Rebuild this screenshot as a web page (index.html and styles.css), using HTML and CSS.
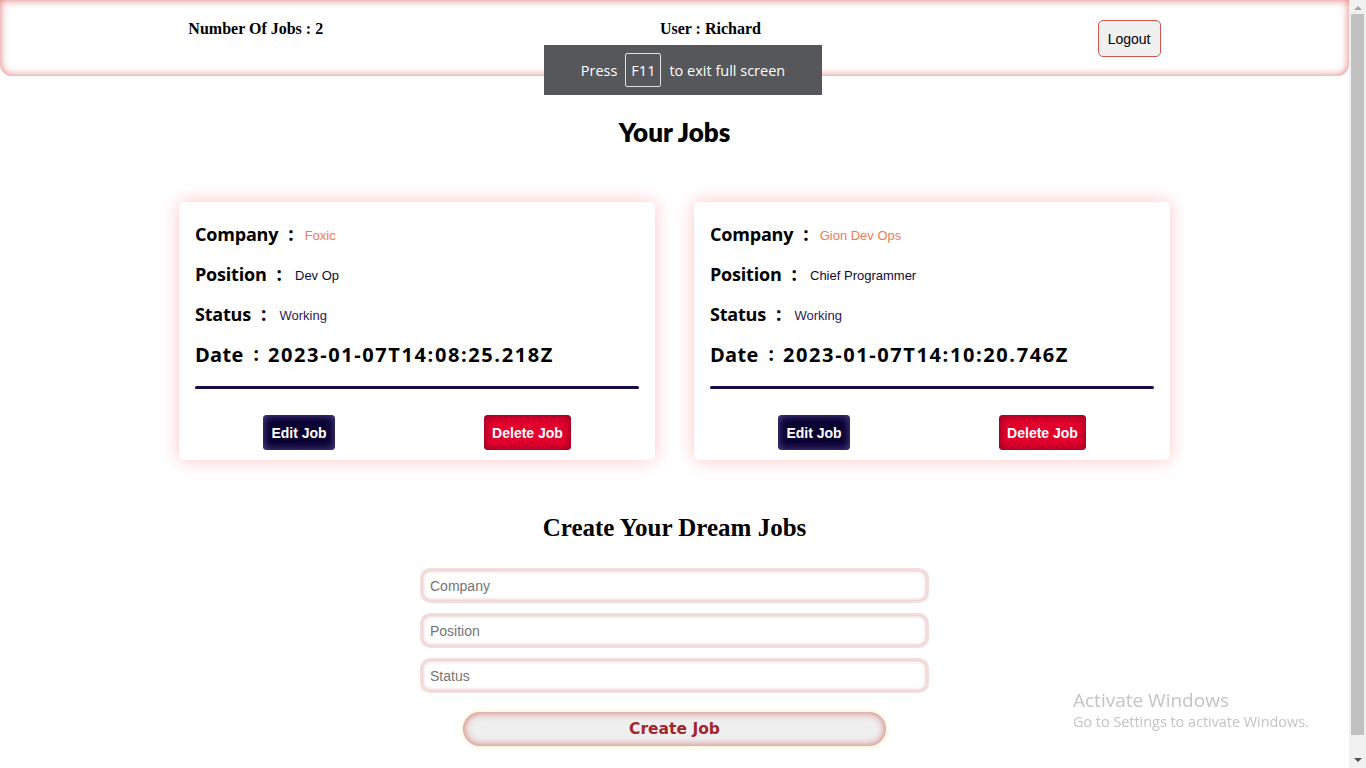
FILE: index.html
```html
<!DOCTYPE html>
<html>
<head>
<meta charset="utf-8">
<title>Jobs</title>
<link rel="stylesheet" href="styles.css">
</head>
<body>
<div class="viewport">
  <header class="topbar">
    <h4 class="topbar-text">Number Of Jobs : 2</h4>
    <h4 class="topbar-text">User : Richard</h4>
    <button class="logout">Logout</button>
  </header>

  <main class="page">
    <h2 class="jobs-title">Your Jobs</h2>
    <section class="cards">
      <article class="card">
        <div class="row"><span class="lbl">Company</span><span class="colon">:</span><span class="val company">Foxic</span></div>
        <div class="row"><span class="lbl">Position</span><span class="colon">:</span><span class="val position">Dev Op</span></div>
        <div class="row"><span class="lbl">Status</span><span class="colon">:</span><span class="val status">Working</span></div>
        <div class="row"><span class="lbl date-lbl">Date</span><span class="colon date-colon">:</span><span class="date">2023-01-07T14:08:25.218Z</span></div>
        <hr class="sep">
        <div class="actions">
          <button class="btn edit">Edit Job</button>
          <button class="btn delete">Delete Job</button>
        </div>
      </article>
      <article class="card">
        <div class="row"><span class="lbl">Company</span><span class="colon">:</span><span class="val company">Gion Dev Ops</span></div>
        <div class="row"><span class="lbl">Position</span><span class="colon">:</span><span class="val position">Chief Programmer</span></div>
        <div class="row"><span class="lbl">Status</span><span class="colon">:</span><span class="val status">Working</span></div>
        <div class="row"><span class="lbl date-lbl">Date</span><span class="colon date-colon">:</span><span class="date">2023-01-07T14:10:20.746Z</span></div>
        <hr class="sep">
        <div class="actions">
          <button class="btn edit">Edit Job</button>
          <button class="btn delete">Delete Job</button>
        </div>
      </article>
    </section>

    <h2 class="create-title">Create Your Dream Jobs</h2>
    <form class="form">
      <input class="field" type="text" placeholder="Company">
      <input class="field" type="text" placeholder="Position">
      <input class="field" type="text" placeholder="Status">
      <button type="button" class="create">Create Job</button>
    </form>
  </main>
</div>

<div class="scrollbar">
  <span class="arrow up"></span>
  <span class="thumb"></span>
  <span class="arrow down"></span>
</div>

<div class="fs-note">Press <span class="key">F11</span> to exit full screen</div>

<div class="activate">
  <div class="act-title">Activate Windows</div>
  <div class="act-sub">Go to Settings to activate Windows.</div>
</div>
</body>
</html>
```

FILE: styles.css
```css
html, body {
  margin: 0;
  padding: 0;
  background: #ffffff;
}

body {
  font-family: "Liberation Serif", serif;
  color: #000;
  overflow: hidden;
}

.viewport {
  margin-right: 17px;
}

.topbar {
  height: 76px;
  box-sizing: border-box;
  padding: 20px 20px 0;
  display: flex;
  justify-content: space-around;
  align-items: flex-start;
  border-radius: 0 0 12px 12px;
  box-shadow: inset 0 0 9px rgba(214, 70, 70, 0.75);
  background: #fff;
}

.topbar-text {
  margin: 0;
  font-family: "Liberation Serif", serif;
  font-weight: 700;
  font-size: 16px;
  line-height: 18px;
}

.logout {
  width: 63px;
  height: 37px;
  padding: 0;
  border: 1px solid #d9534f;
  border-radius: 5px;
  background: #f0f0f0;
  font-family: "Liberation Sans", Arial, sans-serif;
  font-size: 14px;
  color: #000;
}

.page {
  display: flex;
  flex-direction: column;
  align-items: center;
  padding-bottom: 40px;
}

.jobs-title {
  margin: 41px 0 0;
  font-family: "Lato", sans-serif;
  font-weight: 800;
  font-size: 26px;
  line-height: 30px;
}

.cards {
  margin-top: 55px;
  display: flex;
  gap: 39px;
}

.card {
  width: 476px;
  height: 258px;
  box-sizing: border-box;
  padding: 12px 16px 10px;
  border-radius: 5px;
  background: #fff;
  box-shadow: 0 0 18px rgba(255, 90, 90, 0.35);
}

.row {
  height: 40px;
  display: flex;
  align-items: center;
}

.lbl {
  font-family: "Comic Sans MS", "Open Sans", sans-serif;
  font-weight: 700;
  font-size: 18px;
  letter-spacing: -0.2px;
}

.date-lbl {
  font-size: 20px;
  letter-spacing: 0.3px;
}

.colon {
  font-family: "Open Sans", sans-serif;
  font-weight: 700;
  font-size: 19px;
  margin: 0 11px 0 10px;
}

.date-colon {
  margin: 0 9px 0 10px;
}

.val {
  font-family: "Liberation Sans", Arial, sans-serif;
  font-size: 13px;
  padding-top: 3px;
}

.company { color: #f47a52; }
.position { color: #0e0b35; margin-left: 2px; }
.status { color: #2c1a50; margin-left: 2px; }

.date {
  font-family: "Comic Sans MS", "Open Sans", sans-serif;
  font-weight: 700;
  font-size: 20px;
  letter-spacing: 1.6px;
}

.sep {
  margin: 12px 0 0;
  height: 3px;
  border: 0;
  border-radius: 2px;
  background: #170a45;
}

.actions {
  margin-top: 26px;
  padding: 0 68px;
  display: flex;
  justify-content: space-between;
}

.btn {
  height: 35px;
  padding: 0;
  border: 0;
  border-radius: 4px;
  color: #fff;
  white-space: nowrap;
  font-family: "Liberation Sans", Arial, sans-serif;
  font-weight: 700;
  font-size: 14px;
}

.edit {
  width: 72px;
  background: #0a0232;
  box-shadow: inset 0 0 8px #5e4f9a;
}

.delete {
  width: 87px;
  background: #e2002c;
  box-shadow: inset 0 0 9px #7d0022;
}

.create-title {
  margin: 53px 0 0;
  font-family: "Liberation Serif", serif;
  font-weight: 700;
  font-size: 25px;
  line-height: 30px;
}

.form {
  margin-top: 25px;
  display: flex;
  flex-direction: column;
  align-items: center;
  gap: 10px;
}

.field {
  width: 509px;
  height: 35px;
  box-sizing: border-box;
  padding: 0 8px;
  border: 2px solid #f3dede;
  border-radius: 10px;
  box-shadow: inset 0 0 4px rgba(205, 110, 110, 0.7);
  font-family: "Liberation Sans", Arial, sans-serif;
  font-size: 14px;
  outline: none;
}

.field::placeholder {
  color: #757575;
}

.create {
  margin-top: 9px;
  width: 423px;
  height: 34px;
  border: 0;
  border-radius: 17px;
  background: #efefef;
  box-shadow: inset 0 0 8px rgba(200, 70, 70, 0.8), 0 0 3px 2px #fff6dc;
  color: #a3262e;
  font-family: "DejaVu Sans", Verdana, sans-serif;
  font-weight: 700;
  font-size: 15.5px;
}

.scrollbar {
  position: fixed;
  top: 0;
  right: 0;
  bottom: 0;
  width: 17px;
  background: #f1f1f1;
  display: flex;
  flex-direction: column;
  align-items: center;
}

.arrow {
  width: 0;
  height: 0;
  border-left: 4px solid transparent;
  border-right: 4px solid transparent;
}

.arrow.up {
  margin: 6px 0 4px;
  border-bottom: 4px solid #a3a3a3;
}

.arrow.down {
  margin: 4px 0 6px;
  border-top: 4px solid #505050;
}

.thumb {
  flex: 1;
  width: 13px;
  margin: 0 0 19px;
  background: #c1c1c1;
}

.fs-note {
  position: fixed;
  left: 544px;
  top: 45px;
  width: 278px;
  height: 50px;
  display: flex;
  align-items: center;
  justify-content: center;
  gap: 8px;
  background: #55575b;
  color: #fff;
  font-family: "Open Sans", sans-serif;
  font-size: 14.5px;
}

.key {
  width: 34px;
  height: 32px;
  display: flex;
  align-items: center;
  justify-content: center;
  border: 1px solid #e0e0e0;
  border-radius: 2px;
}

.activate {
  position: fixed;
  left: 1073px;
  top: 687px;
  color: #c4c4c4;
  font-family: "Open Sans", sans-serif;
  pointer-events: none;
}

.act-title {
  font-size: 19px;
  line-height: 26px;
}

.act-sub {
  font-size: 14.4px;
  line-height: 18px;
}
```
